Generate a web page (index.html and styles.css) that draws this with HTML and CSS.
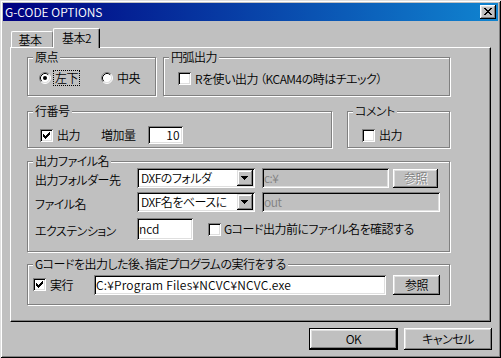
FILE: index.html
```html
<!DOCTYPE html>
<html lang="ja">
<head>
<meta charset="utf-8">
<title>G-CODE OPTIONS</title>
<link rel="stylesheet" href="styles.css">
</head>
<body>
<div class="window">
  <div class="titlebar">
    <span class="title">G-CODE OPTIONS</span>
    <span class="close-btn"><svg width="16" height="14" viewBox="0 0 16 14"><path fill="#000" d="M4 3h2v1h-2z M10 3h2v1h-2z M5 4h2v1h-2z M9 4h2v1h-2z M6 5h4v1h-4z M7 6h2v1h-2z M6 7h4v1h-4z M5 8h2v1h-2z M9 8h2v1h-2z M4 9h2v1h-2z M10 9h2v1h-2z"/></svg></span>
  </div>

  <div class="tabs">
    <div class="tab">基本</div>
    <div class="tab active">基本2</div>
  </div>

  <div class="panel">
    <div class="row">
      <div class="group g-origin">
        <span class="legend">原点</span>
        <div class="line">
          <span class="radio"><svg width="12" height="12" viewBox="0 0 12 12"><circle cx="6" cy="6" r="5" fill="#fff"/><path d="M2.11 9.89 A5.5 5.5 0 0 1 9.89 2.11" fill="none" stroke="#808080"/><path d="M9.89 2.11 A5.5 5.5 0 0 1 2.11 9.89" fill="none" stroke="#fff"/><path d="M2.82 9.18 A4.5 4.5 0 0 1 9.18 2.82" fill="none" stroke="#000"/><path d="M9.18 2.82 A4.5 4.5 0 0 1 2.82 9.18" fill="none" stroke="#dfdfdf"/><circle cx="6" cy="6" r="2" fill="#000"/></svg></span>
          <span class="rlabel focus">左下</span>
          <span class="radio second"><svg width="12" height="12" viewBox="0 0 12 12"><circle cx="6" cy="6" r="5" fill="#fff"/><path d="M2.11 9.89 A5.5 5.5 0 0 1 9.89 2.11" fill="none" stroke="#808080"/><path d="M9.89 2.11 A5.5 5.5 0 0 1 2.11 9.89" fill="none" stroke="#fff"/><path d="M2.82 9.18 A4.5 4.5 0 0 1 9.18 2.82" fill="none" stroke="#000"/><path d="M9.18 2.82 A4.5 4.5 0 0 1 2.82 9.18" fill="none" stroke="#dfdfdf"/></svg></span>
          <span class="rlabel">中央</span>
        </div>
      </div>
      <div class="group g-arc">
        <span class="legend">円弧出力</span>
        <div class="line">
          <span class="check"></span>
          <span class="clabel">Rを使い出力 （KCAM4の時はチエック）</span>
        </div>
      </div>
    </div>

    <div class="row row2">
      <div class="group g-lineno">
        <span class="legend">行番号</span>
        <div class="line tall">
          <span class="check"><svg width="13" height="13" viewBox="0 0 13 13"><path fill="#000" d="M3 5h1v3h-1z M4 6h1v3h-1z M5 7h1v3h-1z M6 6h1v3h-1z M7 5h1v3h-1z M8 4h1v3h-1z M9 3h1v3h-1z"/></svg></span>
          <span class="clabel">出力</span>
          <span class="inc-label">増加量</span>
          <span class="edit num">10</span>
        </div>
      </div>
      <div class="group g-comment">
        <span class="legend">コメント</span>
        <div class="line tall">
          <span class="check"></span>
          <span class="clabel">出力</span>
        </div>
      </div>
    </div>

    <div class="group g-file">
      <span class="legend">出力ファイル名</span>
      <div class="frow">
        <span class="flabel">出力フォルダー先</span>
        <span class="combo"><span class="combo-text">DXFのフォルダ</span><span class="arrow"><svg width="16" height="16" viewBox="0 0 16 16"><path fill="#000" d="M4 6h7v1h-7z M5 7h5v1h-5z M6 8h3v1h-3z M7 9h1v1h-1z"/></svg></span></span>
        <span class="edit disabled e-folder">c:¥</span>
        <span class="btn disabled-btn b-ref1">参照</span>
      </div>
      <div class="frow r2">
        <span class="flabel">ファイル名</span>
        <span class="combo"><span class="combo-text">DXF名をベースに</span><span class="arrow"><svg width="16" height="16" viewBox="0 0 16 16"><path fill="#000" d="M4 6h7v1h-7z M5 7h5v1h-5z M6 8h3v1h-3z M7 9h1v1h-1z"/></svg></span></span>
        <span class="edit disabled e-name">out</span>
      </div>
      <div class="frow r3">
        <span class="flabel">エクステンション</span>
        <span class="edit e-ext">ncd</span>
        <span class="check c-confirm"></span>
        <span class="clabel">Gコード出力前にファイル名を確認する</span>
      </div>
    </div>

    <div class="group g-exec">
      <span class="legend">Gコードを出力した後、指定プログラムの実行をする</span>
      <div class="line exec">
        <span class="check"><svg width="13" height="13" viewBox="0 0 13 13"><path fill="#000" d="M3 5h1v3h-1z M4 6h1v3h-1z M5 7h1v3h-1z M6 6h1v3h-1z M7 5h1v3h-1z M8 4h1v3h-1z M9 3h1v3h-1z"/></svg></span>
        <span class="clabel">実行</span>
        <span class="edit e-path">C:¥Program Files¥NCVC¥NCVC.exe</span>
        <span class="btn b-ref2">参照</span>
      </div>
    </div>
  </div>

  <div class="buttons">
    <span class="btn default b-ok">OK</span>
    <span class="btn b-cancel">キャンセル</span>
  </div>
</div>
</body>
</html>
```

FILE: styles.css
```css
* { box-sizing: border-box; }
html, body { margin: 0; padding: 0; }
body {
  width: 501px;
  height: 358px;
  overflow: hidden;
  background: #c0c0c0;
  color: #000;
  font-family: "Noto Sans CJK JP", "Noto Sans", sans-serif;
  font-size: 12px;
  font-weight: 350;
  line-height: 14px;
  letter-spacing: -0.5px;
  font-feature-settings: "palt";
  white-space: nowrap;
}

.window {
  width: 501px;
  height: 358px;
  padding: 3px;
  background: #c0c0c0;
  display: flex;
  flex-direction: column;
  box-shadow: inset 1px 1px #dfdfdf, inset -1px -1px #000, inset 2px 2px #fff, inset -2px -2px #808080;
}

/* title bar */
.titlebar {
  height: 18px;
  flex-shrink: 0;
  display: flex;
  align-items: center;
  justify-content: space-between;
  padding: 0 2px;
  background: linear-gradient(to right, #000080, #1084d0);
}
.title { color: #fff; font-feature-settings: normal; letter-spacing: 0; }
.close-btn {
  width: 16px;
  height: 14px;
  display: block;
  background: #c0c0c0;
  box-shadow: inset -1px -1px #000, inset 1px 1px #fff, inset -2px -2px #808080, inset 2px 2px #dfdfdf;
}
.close-btn svg { display: block; }

/* tabs */
.tabs {
  margin-top: 7px;
  height: 19px;
  flex-shrink: 0;
  display: flex;
  align-items: flex-end;
  padding-left: 8px;
}
.tab {
  width: 42px;
  height: 16px;
  display: flex;
  align-items: center;
  justify-content: center;
  padding-right: 4px;
  border-top: 1px solid #fff;
  border-left: 1px solid #fff;
  border-right: 1px solid #808080;
  border-top-left-radius: 2px;
  border-top-right-radius: 2px;
}
.tab.active {
  width: 47px;
  height: 20px;
  margin-bottom: -1px;
  padding: 0 0 2px 0;
  position: relative;
  z-index: 1;
  background: #c0c0c0;
  border-right: 1px solid #000;
  box-shadow: inset -1px 0 #808080;
}

/* panel */
.panel {
  margin: 0 7px;
  height: 275px;
  flex-shrink: 0;
  border-top: 1px solid #fff;
  border-left: 1px solid #fff;
  border-right: 1px solid #000;
  border-bottom: 1px solid #000;
  box-shadow: inset -1px -1px #808080;
  padding: 9px 0 0 16px;
  display: flex;
  flex-direction: column;
}
.row { display: flex; }
.row2 { margin-top: 15px; }

.group {
  position: relative;
  border: 1px solid #808080;
  box-shadow: inset 1px 1px #fff, 1px 1px #fff;
}
.legend {
  position: absolute;
  top: -8px;
  left: 5px;
  padding: 0 2px;
  line-height: 14px;
  background: #c0c0c0;
}
.line { display: flex; align-items: center; height: 13px; }
.line.tall { height: 18px; }

.g-origin { width: 129px; height: 39px; padding: 14px 0 0 11px; }
.g-origin .line { height: 12px; }
.g-arc { width: 287px; height: 39px; margin-left: 7px; padding: 14px 0 0 14px; }
.g-lineno { width: 305px; height: 37px; padding: 14px 0 0 12px; }
.g-comment { width: 103px; height: 37px; margin-left: 15px; padding: 14px 0 0 14px; }
.g-file { width: 423px; height: 91px; margin-top: 13px; padding: 6px 0 0 7px; }
.g-exec { width: 423px; height: 41px; margin-top: 12px; padding: 13px 0 0 5px; }

/* radio */
.radio { width: 12px; height: 12px; flex-shrink: 0; display: block; }
.radio svg { display: block; }
.radio.second { margin-left: 21px; }
.rlabel {
  margin-left: 2px;
  padding: 0 1px;
  border: 1px solid transparent;
  line-height: 14px;
}
.rlabel.focus { border: 1px dotted #000; }

/* checkbox */
.check {
  width: 13px;
  height: 13px;
  flex-shrink: 0;
  display: block;
  background: #fff;
  box-shadow: inset 1px 1px #808080, inset -1px -1px #fff, inset 2px 2px #000, inset -2px -2px #dfdfdf;
}
.check svg { display: block; }
.clabel { margin-left: 4px; }
.inc-label { margin-left: 21px; }

/* edits */
.edit {
  display: flex;
  align-items: center;
  height: 20px;
  padding: 0 2px;
  background: #fff;
  overflow: hidden;
  box-shadow: inset 1px 1px #808080, inset -1px -1px #fff, inset 2px 2px #000, inset -2px -2px #dfdfdf;
}
.edit.num { width: 35px; height: 18px; margin-left: 12px; justify-content: flex-end; padding-right: 3px; letter-spacing: 0; }
.edit.disabled { background: #c0c0c0; color: #808080; }
.e-folder { width: 127px; margin-left: 7px; }
.e-name { width: 178px; margin-left: 7px; }
.e-ext { width: 56px; height: 22px; letter-spacing: 0; }
.e-path { width: 292px; margin-left: 21px; letter-spacing: 0.2px; }

/* combo */
.combo {
  width: 118px;
  height: 20px;
  display: flex;
  padding: 2px;
  background: #fff;
  box-shadow: inset 1px 1px #808080, inset -1px -1px #fff, inset 2px 2px #000, inset -2px -2px #dfdfdf;
}
.combo-text { flex: 1; padding-left: 2px; display: flex; align-items: center; overflow: hidden; }
.arrow {
  width: 16px;
  height: 16px;
  display: block;
  background: #c0c0c0;
  box-shadow: inset -1px -1px #000, inset 1px 1px #dfdfdf, inset -2px -2px #808080, inset 2px 2px #fff;
}
.arrow svg { display: block; }

/* file rows */
.frow { display: flex; align-items: center; height: 20px; }
.frow.r2 { margin-top: 4px; }
.frow.r3 { margin-top: 6px; height: 22px; }
.flabel { width: 102px; padding-top: 3px; }
.c-confirm { margin-left: 15px; }
.c-confirm + .clabel { margin-left: 3px; }

/* buttons */
.btn {
  display: flex;
  align-items: center;
  justify-content: center;
  background: #c0c0c0;
  box-shadow: inset -1px -1px #000, inset 1px 1px #fff, inset -2px -2px #808080, inset 2px 2px #dfdfdf;
}
.btn.default {
  box-shadow: inset 0 0 0 1px #000, inset -2px -2px #000, inset 2px 2px #fff, inset -3px -3px #808080, inset 3px 3px #dfdfdf;
}
.disabled-btn { color: #808080; text-shadow: 1px 1px #fff; }
.b-ref1 { width: 45px; height: 19px; margin-left: 4px; }
.b-ref2 { width: 47px; height: 20px; margin-left: 7px; }

.buttons {
  display: flex;
  justify-content: flex-end;
  gap: 6px;
  margin-top: 6px;
  padding-right: 6px;
}
.b-ok { width: 89px; height: 22px; }
.b-cancel { width: 88px; height: 22px; }
```
